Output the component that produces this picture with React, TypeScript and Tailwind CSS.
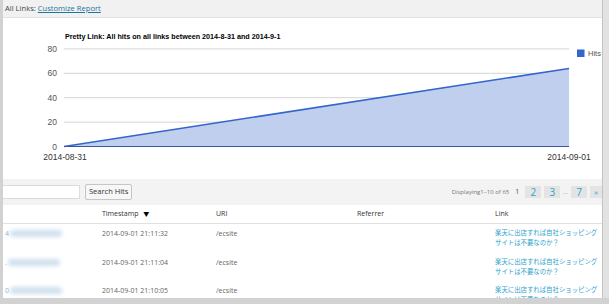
import React from 'react'

const rows = [
  { id: '4', time: '2014-09-01 21:11:32' },
  { id: '.', time: '2014-09-01 21:11:04' },
  { id: '0', time: '2014-09-01 21:10:05' },
]

const linkTitle = ['楽天に出店すれば自社ショッピング', 'サイトは不要なのか？']

const HitsChart = () => {
  const ticks = [80, 60, 40, 20, 0]
  const y = (v: number) => 128.5 - (v / 20) * 24.4
  return (
    <svg width={599} height={161} viewBox="0 0 599 161" fontFamily="'Liberation Sans', Arial, sans-serif">
      <text x={62} y={20.5} fontSize={7.2} fontWeight="bold" fill="#000">
        Pretty Link: All hits on all links between 2014-8-31 and 2014-9-1
      </text>
      {ticks.map((t) => (
        <g key={t}>
          <line x1={61} x2={566} y1={y(t)} y2={y(t)} stroke="#d4d4d4" strokeWidth={1} />
          <text x={54} y={y(t) + 3} fontSize={8.5} textAnchor="end" fill="#555">
            {t}
          </text>
        </g>
      ))}
      <polygon points={`61,${y(0)} 566,${y(64)} 566,${y(0)}`} fill="#c1cfee" />
      <line x1={61} y1={y(0)} x2={566} y2={y(64)} stroke="#3366cc" strokeWidth={1.6} />
      <line x1={61} y1={y(0)} x2={566} y2={y(0)} stroke="#3a54a8" strokeWidth={1.2} />
      <text x={62} y={141.5} fontSize={8.5} textAnchor="middle" fill="#333">
        2014-08-31
      </text>
      <text x={566} y={141.5} fontSize={8.5} textAnchor="middle" fill="#333">
        2014-09-01
      </text>
      <rect x={574} y={31.5} width={7.5} height={7.5} fill="#3366cc" />
      <text x={585} y={38.3} fontSize={7.5} fill="#555">
        Hits
      </text>
    </svg>
  )
}

export default function App() {
  const font = "font-['Open_Sans','Noto_Sans_CJK_JP',sans-serif]"
  return (
    <div className={`w-[609px] h-[304px] bg-[#d2d2d2] flex ${font}`}>
      <div className="ml-[3px] w-[599px] h-[298px] overflow-hidden bg-[#f1f1f1] flex flex-col">
        <div className="shrink-0 h-[17px] pl-[2px] flex items-center text-[7.6px] text-[#444]">
          All Links:&nbsp;<span className="text-[#21759b] underline">Customize Report</span>
        </div>

        <div className="shrink-0 h-[162px] bg-white border-t border-[#e3e3e3]">
          <HitsChart />
        </div>

        <div className="shrink-0 h-[26px] bg-[#f3f3f3] flex items-center">
          <div className="w-[77px] h-[14px] bg-white border border-l-0 border-[#dcdcdc]" />
          <button className="ml-[5px] h-[16px] px-[3px] bg-[#f7f7f7] border border-[#c6c6c6] rounded-[2px] text-[7.5px] text-[#333] leading-none">
            Search Hits
          </button>
          <div className="ml-auto flex items-center gap-[3px] text-[6px] text-[#777]">
            <span>Displaying1–10 of 65</span>
            <span className="ml-[3px] mr-[3px] text-[7px] text-[#555]">1</span>
            <span className="w-[16px] h-[12px] bg-[#e4e4e4] text-[10px] text-[#2ea2cc] flex items-center justify-center">2</span>
            <span className="w-[16px] h-[12px] bg-[#e4e4e4] text-[10px] text-[#2ea2cc] flex items-center justify-center">3</span>
            <span className="text-[#888]">...</span>
            <span className="w-[16px] h-[12px] bg-[#e4e4e4] text-[10px] text-[#2ea2cc] flex items-center justify-center">7</span>
            <span className="w-[12px] h-[12px] bg-[#e4e4e4] text-[8px] text-[#2ea2cc] flex items-center justify-center">»</span>
          </div>
        </div>

        <div className="flex-1 min-h-0 overflow-hidden bg-white">
          <div className="grid grid-cols-[96px_114px_141px_138px_1fr] h-[19px] items-center border-b border-[#e1e1e1] text-[7px] text-[#333]">
            <span />
            <span className="pl-[3px]">
              Timestamp <span className="ml-[3px] text-[6px] text-black">▼</span>
            </span>
            <span className="pl-[3px]">URI</span>
            <span className="pl-[3px]">Referrer</span>
            <span className="pl-[3px]">Link</span>
          </div>
          {rows.map((r) => (
            <div key={r.time} className="grid grid-cols-[96px_114px_141px_138px_1fr] h-[28.5px] text-[7px] text-[#666]">
              <div className="pl-[2px] pt-[5px] flex">
                <span className="text-[#8bb4d4]">{r.id}</span>
                <span className="ml-[1px] mt-[1px] w-[52px] h-[7px] rounded-full bg-[#cfe0ee] blur-[2px]" />
              </div>
              <div className="pl-[3px] pt-[5px]">{r.time}</div>
              <div className="pl-[3px] pt-[5px]">/ecsite</div>
              <div />
              <div className="pl-[3px] pt-[4px] text-[6.4px] leading-[10px] text-[#2ea2cc]">
                <div className="whitespace-nowrap">{linkTitle[0]}</div>
                <div>{linkTitle[1]}</div>
              </div>
            </div>
          ))}
        </div>
      </div>
      <div className="w-[1px] h-[298px] bg-[#c4c4c4]" />
      <div className="flex-1 h-[298px] bg-[#e2e2e2]" />
    </div>
  )
}
